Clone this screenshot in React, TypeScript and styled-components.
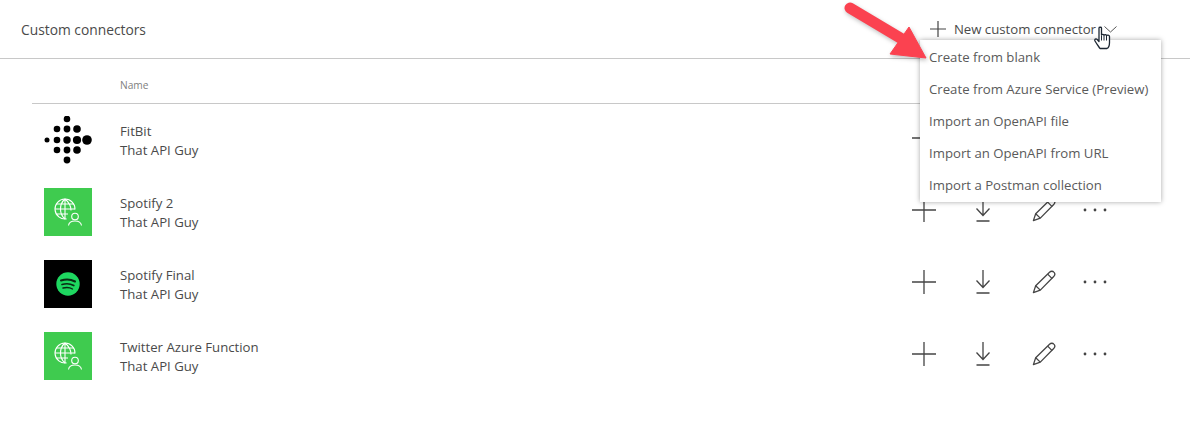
import styled, { createGlobalStyle } from "styled-components";

interface Connector {
  name: string;
  owner: string;
  kind: "fitbit" | "globe" | "spotify";
}

const connectors: Connector[] = [
  { name: "FitBit", owner: "That API Guy", kind: "fitbit" },
  { name: "Spotify 2", owner: "That API Guy", kind: "globe" },
  { name: "Spotify Final", owner: "That API Guy", kind: "spotify" },
  { name: "Twitter Azure Function", owner: "That API Guy", kind: "globe" },
];

const menuItems = [
  "Create from blank",
  "Create from Azure Service (Preview)",
  "Import an OpenAPI file",
  "Import an OpenAPI from URL",
  "Import a Postman collection",
];

const fitbitDots = [
  [23, 3, 3.3],
  [13, 13, 3.3], [23, 13, 3.4], [33, 13, 3.8],
  [3, 24, 2.5], [13, 24, 3.3], [23, 24, 3.7], [33, 24, 4.1], [43, 24, 4.8],
  [13, 34, 3.3], [23, 34, 3.4], [33, 34, 3.8],
  [23, 44, 3.4],
];

const PlusIcon = ({ size = 24 }: { size?: number }) => (
  <svg width={size} height={size} viewBox="0 0 24 24" fill="none" stroke="#444" strokeWidth={24 / size + 0.3}>
    <path d="M0 12H24M12 0V24" />
  </svg>
);

const DownloadIcon = () => (
  <svg width="14" height="24" viewBox="0 0 14 24" fill="none" stroke="#444" strokeWidth="1.3">
    <path d="M7 0V17M0.500 10.500L7 17.500L13.500 10.500M0.500 23H13.500" />
  </svg>
);

const PencilIcon = () => (
  <svg width="24" height="24" viewBox="0 0 26 26" fill="none" stroke="#444" strokeWidth="1.4" strokeLinejoin="round">
    <path d="M1.500 24.500L4 17L19 2.500C20.500 1 22.500 1 23.700 2.300C25 3.600 25 5.500 23.500 7L9 21.800Z" />
    <path d="M4 17L9 21.800M17 4.500L21.800 9.300" />
  </svg>
);

const DotsIcon = () => (
  <svg width="24" height="4" viewBox="0 0 24 4" fill="#444">
    <circle cx="2" cy="2" r="1.400" />
    <circle cx="12" cy="2" r="1.400" />
    <circle cx="22" cy="2" r="1.400" />
  </svg>
);

const GlobeIcon = () => (
  <svg width="28" height="28" viewBox="0 0 28 28" fill="none" stroke="#fff" strokeWidth="1.100">
    <path d="M12.500 20.900A10 10 0 1 1 21 11.500" />
    <path d="M11 1C5 6 5 16 11 21M11 1C16.500 5.500 17 9 17 12.500M11 1V21M2.500 6H19.500M1 11H21M2.500 16H14" />
    <circle cx="21" cy="18.500" r="3.300" />
    <path d="M14.500 27.500C15 24 17.500 23 21 23C24.500 23 27 24 27.500 27.500" />
  </svg>
);

const SpotifyIcon = () => (
  <svg width="24" height="24" viewBox="0 0 24 24" fill="none">
    <circle cx="12" cy="12" r="11.700" fill="#1ed760" />
    <g stroke="#0a2a14" strokeLinecap="round">
      <path d="M5 8.500C9.500 7 15 7.300 19 9.500" strokeWidth="2" />
      <path d="M6 12.500C10 11.300 14.500 11.700 17.800 13.500" strokeWidth="1.700" />
      <path d="M7 16C10.500 15.200 14 15.500 16.500 17" strokeWidth="1.400" />
    </g>
  </svg>
);

const ConnectorIcon = ({ kind }: { kind: Connector["kind"] }) => {
  if (kind === "fitbit") {
    return (
      <LogoTile $bg="transparent">
        <svg width="48" height="48" viewBox="0 0 48 48" fill="#000">
          {fitbitDots.map(([cx, cy, r]) => (
            <circle key={`${cx}-${cy}`} cx={cx} cy={cy} r={r} />
          ))}
        </svg>
      </LogoTile>
    );
  }
  if (kind === "spotify") {
    return (
      <LogoTile $bg="#000">
        <SpotifyIcon />
      </LogoTile>
    );
  }
  return (
    <LogoTile $bg="#3fcb4f">
      <GlobeIcon />
    </LogoTile>
  );
};

export default function App() {
  return (
    <>
      <GlobalStyle />
      <Page>
        <Header>
          <PageTitle>Custom connectors</PageTitle>
          <NewButton>
            <PlusIcon size={16} />
            <span>New custom connector</span>
            <svg width="13" height="7" viewBox="0 0 13 7" fill="none" stroke="#555" strokeWidth="1">
              <path d="M0.500 0.500L6.500 6L12.500 0.500" />
            </svg>
          </NewButton>
        </Header>
        <Table>
          <ColumnHead>Name</ColumnHead>
          {connectors.map((c) => (
            <Row key={c.name}>
              <ConnectorIcon kind={c.kind} />
              <NameCell>
                <span>{c.name}</span>
                <span>{c.owner}</span>
              </NameCell>
              <Actions>
                <PlusIcon />
                <DownloadIcon />
                <PencilIcon />
                <DotsIcon />
              </Actions>
            </Row>
          ))}
        </Table>

        <Menu>
          {menuItems.map((item) => (
            <MenuItem key={item}>{item}</MenuItem>
          ))}
        </Menu>

        <Arrow width="92" height="66" viewBox="0 0 92 66">
          <path d="M10 8L62 39" stroke="#fb4250" strokeWidth="11" strokeLinecap="round" />
          <path d="M86 58L50 54L69 27Z" fill="#fb4250" stroke="#fb4250" strokeWidth="1" strokeLinejoin="round" />
        </Arrow>

        <Hand width="18" height="24" viewBox="0 0 18 23">
          <path
            d="M5 1.500C5 .5 7.500 .5 7.500 1.500V8.500C8 7.500 10 7.500 10 8.800C10.500 7.800 12.500 7.800 12.500 9.200C13 8.300 15.500 8.300 15.500 10V16C15.500 19 14 21.500 13 22H6C5 20.500 3 18 1 14.500C.3 13 1.800 11.500 3.200 13L5 15Z"
            fill="#fff"
            stroke="#1d2733"
            strokeWidth="1.300"
            strokeLinejoin="round"
          />
          <path d="M7.500 9V14M10 9V14M12.500 9.500V14" stroke="#1d2733" strokeWidth="1" />
        </Hand>
      </Page>
    </>
  );
}

const GlobalStyle = createGlobalStyle`
  html, body {
    margin: 0;
    padding: 0;
    background: #fff;
  }
  body {
    font-family: "Open Sans", "Noto Sans", "Liberation Sans", sans-serif;
    color: #4a4a4a;
  }
`;

const Page = styled.div`
  position: relative;
  width: 1190px;
  height: 421px;
  overflow: hidden;
  background: #fff;
`;

const Header = styled.header`
  display: flex;
  align-items: center;
  justify-content: space-between;
  box-sizing: border-box;
  height: 59px;
  padding: 0 73px 0 21px;
  border-bottom: 1px solid #c8c8c8;
`;

const PageTitle = styled.h1`
  margin: 0;
  font-size: 13.8px;
  font-weight: 400;
  color: #4a4a4a;
`;

const NewButton = styled.div`
  display: flex;
  align-items: center;
  gap: 8px;
  font-size: 13.2px;
  color: #4a4a4a;
`;

const Table = styled.div`
  display: flex;
  flex-direction: column;
  margin-left: 32px;
  width: 1128px;
`;

const ColumnHead = styled.div`
  box-sizing: border-box;
  height: 45px;
  padding: 19px 0 0 88px;
  font-size: 10.2px;
  color: #808080;
  border-bottom: 1px solid #c8c8c8;
`;

const Row = styled.div`
  display: flex;
  align-items: center;
  height: 72px;
  padding-left: 12px;
`;

const LogoTile = styled.div<{ $bg: string }>`
  display: flex;
  align-items: center;
  justify-content: center;
  flex: none;
  width: 48px;
  height: 48px;
  background: ${(p) => p.$bg};
`;

const NameCell = styled.div`
  display: flex;
  flex: 1;
  flex-direction: column;
  margin-left: 28px;
  padding-top: 2px;
  font-size: 13.2px;
  line-height: 19px;
  color: #4a4a4a;
`;

const Actions = styled.div`
  display: grid;
  grid-template-columns: 58px 59px 63px 40px;
  align-items: center;
  justify-items: center;
  margin: 0 45px 4px 0;
`;

const Menu = styled.ul`
  position: absolute;
  left: 920px;
  top: 40px;
  box-sizing: border-box;
  width: 241px;
  margin: 0;
  padding: 1px 0;
  list-style: none;
  background: #fff;
  box-shadow: 0 0 5px rgba(0, 0, 0, 0.35);
`;

const MenuItem = styled.li`
  box-sizing: border-box;
  height: 32px;
  padding-left: 9px;
  font-size: 13.2px;
  line-height: 32px;
  color: #5a5a5a;
  white-space: nowrap;
`;

const Arrow = styled.svg`
  position: absolute;
  left: 840px;
  top: 0;
  filter: drop-shadow(1px 2px 2px rgba(0, 0, 0, 0.25));
`;

const Hand = styled.svg`
  position: absolute;
  left: 1094px;
  top: 26px;
`;
